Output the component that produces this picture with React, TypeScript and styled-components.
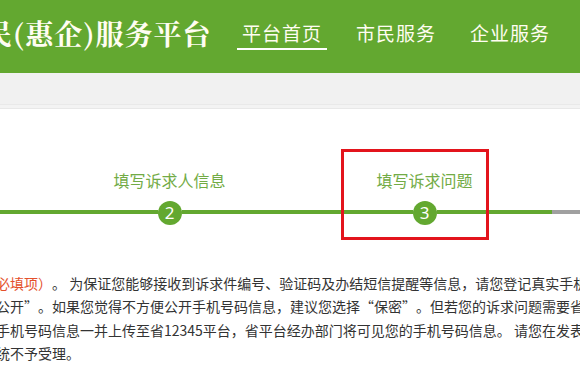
import React from "react";
import styled, { createGlobalStyle } from "styled-components";

const GREEN = "#63a830";

const GlobalStyle = createGlobalStyle`
  html, body {
    margin: 0;
    padding: 0;
    overflow: hidden;
    background: #fff;
  }
  body {
    font-family: "Noto Sans CJK SC", "Noto Sans", sans-serif;
    width: 580px;
  }
`;

const steps = [
  { n: 1, label: "阅读诉求须知", done: true },
  { n: 2, label: "填写诉求人信息", done: true },
  { n: 3, label: "填写诉求问题", done: true },
  { n: 4, label: "提交完成", done: false },
];

const navItems = [
  { text: "平台首页", active: true },
  { text: "市民服务", active: false },
  { text: "企业服务", active: false },
];

const Header = styled.header`
  height: 73px;
  background: ${GREEN};
  overflow: hidden;
`;

const HeaderInner = styled.div`
  display: flex;
  align-items: flex-start;
  margin-left: -45px;
  padding-top: 13px;
  white-space: nowrap;
`;

const Title = styled.h1`
  width: 282px;
  flex-shrink: 0;
  margin: 0;
  font-family: "Noto Serif CJK SC", "Noto Sans CJK SC", serif;
  font-size: 28px;
  line-height: 40px;
  font-weight: 700;
  letter-spacing: 1px;
  color: #fffdf2;
`;

const Nav = styled.nav`
  display: flex;
  gap: 24px;
  padding-top: 7px;
`;

const NavItem = styled.a<{ $active: boolean }>`
  display: block;
  padding: 0 5px 2px;
  font-size: 19px;
  line-height: 26px;
  letter-spacing: 1px;
  color: #fffdf2;
  border-bottom: 2px solid ${(p) => (p.$active ? "#fff" : "transparent")};
  cursor: pointer;
`;

const Crumbs = styled.div`
  height: 31px;
  background: #f1f1f1;
  border-bottom: 1px solid #e9e9e9;
`;

const CrumbsEdge = styled.div`
  height: 3px;
  background: #f3f3f3;
  border-bottom: 1px solid #e8e8e8;
`;

const Main = styled.main`
  position: relative;
  padding-top: 60px;
  overflow: hidden;
`;

const StepRow = styled.div`
  display: flex;
  margin-left: -213px;
`;

const Step = styled.div`
  width: 255px;
  flex-shrink: 0;
  display: flex;
  flex-direction: column;
  align-items: center;
`;

const StepLabel = styled.div`
  font-size: 16px;
  line-height: 22px;
  color: #72ab45;
  white-space: nowrap;
`;

const Track = styled.div`
  width: 100%;
  margin-top: 10px;
  display: flex;
  align-items: center;
`;

const Segment = styled.div<{ $done: boolean }>`
  flex: 1;
  height: 4px;
  margin-top: -3px;
  background: ${(p) => (p.$done ? GREEN : "#a0a0a0")};
`;

const Circle = styled.div<{ $done: boolean }>`
  width: 24px;
  height: 24px;
  border-radius: 50%;
  background: ${(p) => (p.$done ? GREEN : "#a0a0a0")};
  color: #fff;
  font-family: "Noto Sans", sans-serif;
  font-size: 17px;
  line-height: 24px;
  text-align: center;
`;

const Highlight = styled.div`
  position: absolute;
  left: 341px;
  top: 40px;
  width: 148px;
  height: 91px;
  box-sizing: border-box;
  border: 3px solid #e3141c;
  pointer-events: none;
`;

const Notice = styled.div`
  margin-top: 47px;
  margin-left: -60px;
  font-size: 14px;
  line-height: 23.3px;
  color: #333;
  text-spacing-trim: space-all;
`;

const Line = styled.div`
  white-space: nowrap;
`;

const Required = styled.span`
  color: #e4502b;
`;

export default function App() {
  return (
    <>
      <GlobalStyle />
      <Header>
        <HeaderInner>
          <Title>市民(惠企)服务平台</Title>
          <Nav>
            {navItems.map((item) => (
              <NavItem key={item.text} $active={item.active}>
                {item.text}
              </NavItem>
            ))}
          </Nav>
        </HeaderInner>
      </Header>
      <Crumbs />
      <CrumbsEdge />
      <Main>
        <StepRow>
          {steps.map((s) => (
            <Step key={s.n}>
              <StepLabel>{s.label}</StepLabel>
              <Track>
                <Segment $done={s.done} />
                <Circle $done={s.done}>{s.n}</Circle>
                <Segment $done={s.done} />
              </Track>
            </Step>
          ))}
        </StepRow>
        <Highlight />
        <Notice>
          <Line>
            <Required>系电话（必填项）</Required>。 为保证您能够接收到诉求件编号、验证码及办结短信提醒等信息，请您登记真实手机号码。
          </Line>
          <Line>
            码设为“公开”。如果您觉得不方便公开手机号码信息，建议您选择“保密”。但若您的诉求问题需要省级部门办理，
          </Line>
          <Line>
            您提供的手机号码信息一并上传至省12345平台，省平台经办部门将可见您的手机号码信息。 请您在发表诉求时文明用语，
          </Line>
          <Line>否则，系统不予受理。</Line>
        </Notice>
      </Main>
    </>
  );
}
